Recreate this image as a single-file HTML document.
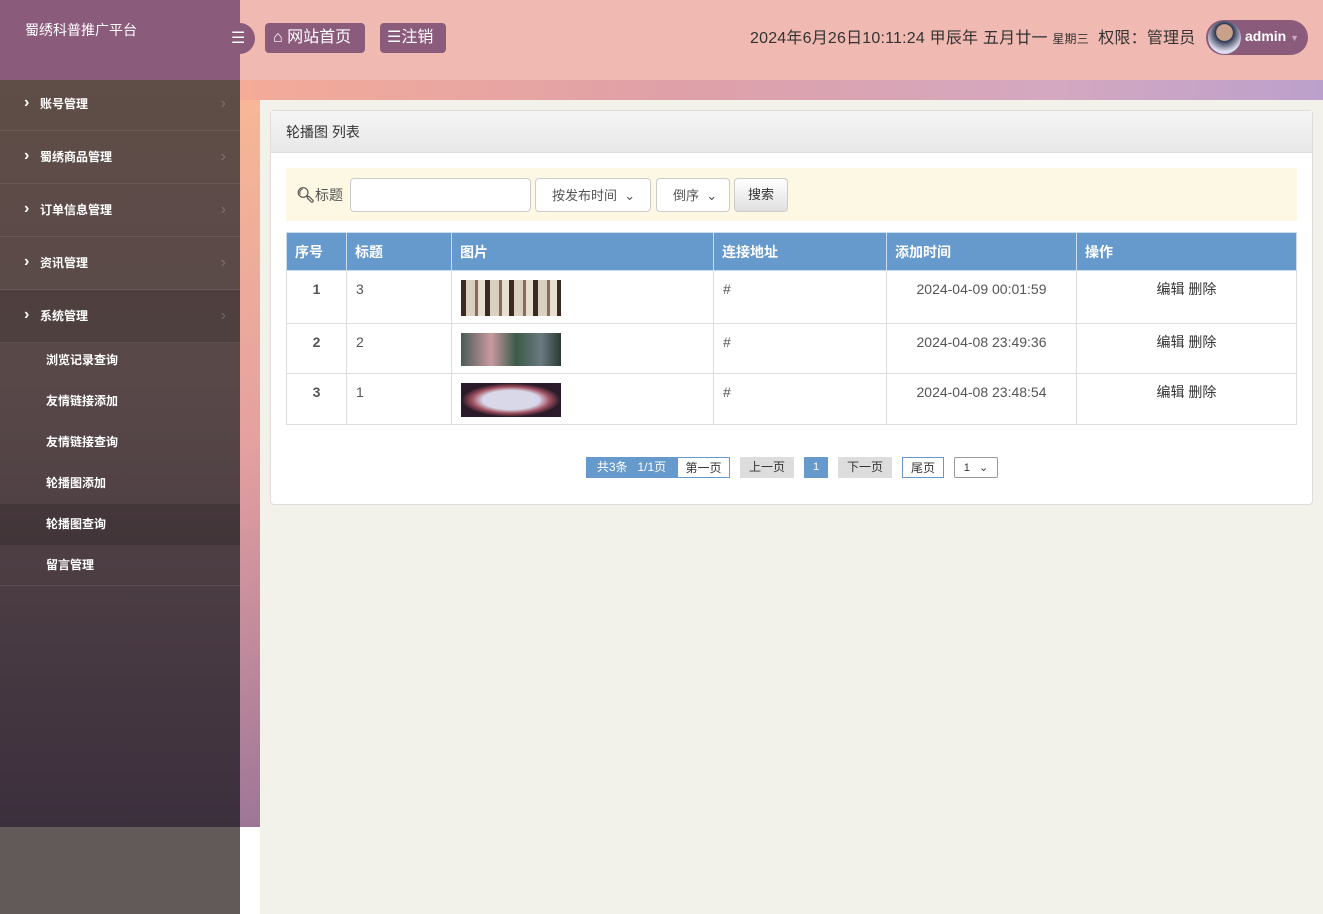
<!DOCTYPE html><html><head><meta charset="utf-8"><style>
*{margin:0;padding:0;box-sizing:border-box}
body{width:1323px;height:914px;overflow:hidden;position:relative;font-family:"Liberation Sans","Noto Sans CJK SC",sans-serif;background:#fff}
.a{position:absolute}
#side{left:0;top:80px;width:240px;height:747px;background:linear-gradient(#5f4d47,#584848 40%,#3c2f3d)}
.mi{position:absolute;left:0;width:240px;height:53px;border-bottom:1px solid rgba(255,255,255,.08);color:#fff;font-size:12px;font-weight:bold;line-height:52px;padding-left:40px}
.mi:before{content:"›";position:absolute;left:24px;font-size:16px;top:-1px}
.mi:after{content:"›";position:absolute;right:14px;color:rgba(255,255,255,.2);font-size:16px;font-weight:normal}
.sm{position:absolute;left:0;width:240px;height:41px;color:#fff;font-size:12px;font-weight:bold;line-height:41px;padding-left:46px}
th,td{border:1px solid #ddd;font-size:14px;color:#555;text-align:left;vertical-align:top}
th{background:#6699cc;color:#fff;font-weight:bold;height:38px;vertical-align:middle;padding-left:8px;border-color:#ccdbea}
td{padding:9px 9px 7px;line-height:18px}
td div{display:block}
.pg{position:absolute;top:457px;height:21px;font-size:12px;line-height:21px;text-align:center;color:#333}
</style></head><body>
<div class="a" style="left:0;top:0;width:1323px;height:80px;background:#f0bab2"></div>
<div class="a" style="left:0;top:0;width:240px;height:80px;background:#8b5b7c"></div>
<div class="a" style="left:25px;top:20px;color:#fff;font-size:14px">蜀绣科普推广平台</div>
<div class="a" style="left:222px;top:23px;width:33px;height:31px;border-radius:0 16px 16px 0;background:#8b5b7c;color:#fff;font-size:16px;line-height:31px;padding-left:9px">☰</div>
<div class="a" style="left:265px;top:23px;width:100px;height:30px;border-radius:4px;background:#8b5b7c;color:#fff;font-size:16px;line-height:30px;padding-left:8px">⌂ 网站首页</div>
<div class="a" style="left:380px;top:23px;width:66px;height:30px;border-radius:4px;background:#8b5b7c;color:#fff;font-size:16px;line-height:30px;padding-left:7px">☰注销</div>
<div class="a" style="left:750px;top:24px;font-size:16px;color:#333;white-space:nowrap;letter-spacing:0.2px">2024年6月26日10:11:24 甲辰年 五月廿一 <span style="font-size:12px">星期三</span>&nbsp; 权限：管理员</div>
<div class="a" style="left:1206px;top:20px;width:102px;height:35px;border-radius:18px;background:#8b5b7c"></div>
<div class="a" style="left:1208px;top:21px;width:33px;height:33px;border-radius:50%;background:radial-gradient(circle at 50% 35%,#c9a08a 30%,#2d3550 32%,#dde 70%)"></div>
<div class="a" style="left:1245px;top:28px;color:#fff;font-size:14px;font-weight:bold">admin <span style="color:#c9a9c0;font-size:9px">▼</span></div>
<div class="a" style="left:240px;top:80px;width:1083px;height:834px;background:linear-gradient(160deg,#f8b896 0%,#e5a0a0 30%,#a07898 60%,#5a3a6a 90%)"></div>
<div class="a" style="left:240px;top:80px;width:1083px;height:20px;background:linear-gradient(90deg,#f4ab98,#dfa0a8 40%,#d4a8c0 75%,#bca0cc)"></div>
<div class="a" style="left:240px;top:827px;width:20px;height:87px;background:#fff"></div>
<div class="a" style="left:260px;top:100px;width:1063px;height:814px;background:#f2f1ea"></div>
<div id="side" class="a"></div>
<div class="a" style="left:0;top:827px;width:240px;height:87px;background:#625a58"></div>
<div class="mi" style="top:78px">账号管理</div>
<div class="mi" style="top:131px">蜀绣商品管理</div>
<div class="mi" style="top:184px">订单信息管理</div>
<div class="mi" style="top:237px">资讯管理</div>
<div class="mi" style="top:290px;background:rgba(0,0,0,.12)">系统管理</div>
<div class="sm" style="top:340px">浏览记录查询</div>
<div class="sm" style="top:381px">友情链接添加</div>
<div class="sm" style="top:422px">友情链接查询</div>
<div class="sm" style="top:463px">轮播图添加</div>
<div class="sm" style="top:504px;background:rgba(0,0,0,.15)">轮播图查询</div>
<div class="sm" style="top:545px;border-bottom:1px solid rgba(255,255,255,.08)">留言管理</div>
<div class="a" style="left:270px;top:110px;width:1043px;height:395px;background:#fff;border:1px solid #ddd;border-radius:4px"></div>
<div class="a" style="left:271px;top:111px;width:1041px;height:42px;background:linear-gradient(#f5f5f5,#e8e8e8);border-bottom:1px solid #ddd;font-size:14px;color:#333;line-height:42px;padding-left:15px">轮播图 列表</div>
<div class="a" style="left:286px;top:168px;width:1011px;height:53px;background:#fcf8e3"></div>
<div class="a" style="left:296px;top:185px;font-size:14px;color:#555"><b style="font-size:15px">🔍︎</b>标题</div>
<div class="a" style="left:350px;top:178px;width:181px;height:34px;border:1px solid #ccc;border-radius:4px;background:#fff"></div>
<div class="a" style="left:535px;top:178px;width:116px;height:34px;border:1px solid #ccc;border-radius:4px;background:#fff;font-size:13px;color:#555;line-height:34px;padding-left:16px">按发布时间 &nbsp;⌄</div>
<div class="a" style="left:656px;top:178px;width:74px;height:34px;border:1px solid #ccc;border-radius:4px;background:#fff;font-size:13px;color:#555;line-height:34px;padding-left:16px">倒序 &nbsp;⌄</div>
<div class="a" style="left:734px;top:178px;width:54px;height:34px;border:1px solid #ccc;border-radius:4px;background:linear-gradient(#fff,#e0e0e0);font-size:13px;color:#333;line-height:32px;text-align:center">搜索</div>
<table class="a" style="left:286px;top:232px;width:1011px;border-collapse:collapse">
<tr><th style="width:60px">序号</th><th style="width:105px">标题</th><th style="width:262px">图片</th><th style="width:173px">连接地址</th><th style="width:190px">添加时间</th><th>操作</th></tr>
<tr><td style="text-align:center;font-weight:bold">1</td><td>3</td><td><div style="width:100px;height:36px;background:repeating-linear-gradient(90deg,#3a2a22 0 5px,#d9d0bf 5px 14px,#8a6a5a 14px 17px,#e7e0d0 17px 24px)"></div></td><td>#</td><td style="text-align:center">2024-04-09 00:01:59</td><td style="text-align:center;color:#333">编辑 删除</td></tr>
<tr><td style="text-align:center;font-weight:bold">2</td><td>2</td><td><div style="width:100px;height:33px;background:linear-gradient(90deg,#4a5a55,#c89aa0 30%,#3c5a48 55%,#6a7a80 80%,#2c3a35)"></div></td><td>#</td><td style="text-align:center">2024-04-08 23:49:36</td><td style="text-align:center;color:#333">编辑 删除</td></tr>
<tr><td style="text-align:center;font-weight:bold">3</td><td>1</td><td><div style="width:100px;height:34px;background:radial-gradient(ellipse at 50% 50%,#d8d8e8 40%,#a05060 55%,#2a1a2a 70%)"></div></td><td>#</td><td style="text-align:center">2024-04-08 23:48:54</td><td style="text-align:center;color:#333">编辑 删除</td></tr>
</table>
<div class="pg" style="left:586px;width:91px;background:#6699cc;color:#fff">共3条 &nbsp; 1/1页</div>
<div class="pg" style="left:677px;width:53px;border:1px solid #6699cc">第一页</div>
<div class="pg" style="left:740px;width:54px;background:#ddd">上一页</div>
<div class="pg" style="left:804px;width:24px;background:#6699cc;color:#fff;font-size:11px">1</div>
<div class="pg" style="left:838px;width:54px;background:#ddd">下一页</div>
<div class="pg" style="left:902px;width:42px;border:1px solid #6699cc">尾页</div>
<div class="pg" style="left:954px;width:44px;border:1px solid #999;border-radius:2px;font-size:11px">1 &nbsp; ⌄</div>
</body></html>
